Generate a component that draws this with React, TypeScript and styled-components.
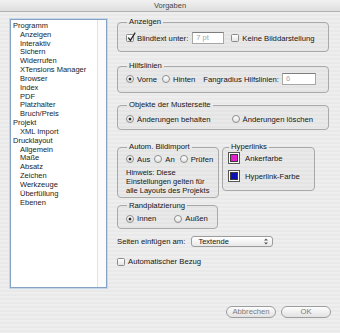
import React from 'react';
import styled, { createGlobalStyle } from 'styled-components';

const GlobalStyle = createGlobalStyle`
  html, body { margin: 0; padding: 0; background: #ececec; }
  body { font-family: "Liberation Sans", Arial, sans-serif; }
`;

//region:Window
const Window = styled.div`
  width: 340px;
  height: 333px;
  overflow: hidden;
  display: flex;
  flex-direction: column;
  background: repeating-linear-gradient(180deg, #eeeeee 0 2px, #e9e9e9 2px 4px);
  color: #161616;
  font-family: "Liberation Sans", Arial, sans-serif;
  font-size: 7.7px;
`
const TitleBar = styled.div`
  flex: none;
  height: 11px;
  line-height: 11px;
  text-align: center;
  font-size: 7.5px;
  color: #454545;
  background: linear-gradient(#f1f1f1, #dedede);
  border-bottom: 1px solid #b2b2b2;
`
const Body = styled.div`
  display: flex;
  align-items: flex-start;
  gap: 10px;
  padding-left: 10px;
`
//endregion

//region:Tree
const TreeBox = styled.div`
  margin-top: 7px;
  width: 97px;
  height: 269px;
  box-sizing: border-box;
  display: flex;
  background: #fff;
  border: 1px solid #86a3c6;
  box-shadow: 0 0 0 1px #c6d6e9;
`
const TreeList = styled.ul`
  flex: 1;
  margin: 0;
  padding: 2px 0 0 2px;
  list-style: none;
  font-size: 7.5px;
  line-height: 8.83px;
  color: #1c1c1c;
`
const TreeItem = styled.li<{ $sub?: boolean }>`
  padding-left: ${p => (p.$sub ? 7 : 0)}px;
  white-space: nowrap;
`
const Scroller = styled.div`
  width: 8px;
  border-left: 1px solid #e3e3e3;
  background: #fbfbfb;
`
//endregion

//region:Panel
const Panel = styled.div`
  width: 212px;
  margin-top: 5px;
  display: flex;
  flex-direction: column;
`
const Group = styled.fieldset<{ $mt?: number; $pt: number; $pb: number; $pl?: number; $w?: number }>`
  margin: ${p => p.$mt ?? 0}px 0 0;
  padding: ${p => p.$pt}px 4px ${p => p.$pb}px ${p => p.$pl ?? 8}px;
  width: ${p => (p.$w ? `${p.$w}px` : 'auto')};
  min-width: 0;
  box-sizing: border-box;
  border: 1px solid #a9a9a9;
  border-radius: 4px;
  background: rgba(0, 0, 0, 0.018);
`
const Legend = styled.legend`
  margin-left: 1px;
  padding: 0 2px;
  font-size: 7.7px;
  line-height: 10px;
`
const Row = styled.div<{ $h?: number; $mt?: number }>`
  display: flex;
  align-items: center;
  height: ${p => p.$h ?? 14}px;
  margin-top: ${p => p.$mt ?? 0}px;
  white-space: nowrap;
`
const PairRow = styled.div`
  display: flex;
  align-items: flex-start;
  gap: 3px;
  margin-top: 12px;
`
const Label = styled.span<{ $ml?: number }>`
  margin-left: ${p => p.$ml ?? 0}px;
`
const Option = styled.label<{ $ml?: number }>`
  display: inline-flex;
  align-items: center;
  gap: 3px;
  margin-left: ${p => p.$ml ?? 0}px;
  white-space: nowrap;
`
const Box = styled.span`
  position: relative;
  flex: none;
  width: 8px;
  height: 8px;
  box-sizing: border-box;
  border: 1px solid #8b8b8b;
  border-radius: 1.5px;
  background: linear-gradient(#ffffff, #e4e4e4);
`
const CheckMark = styled.svg`
  position: absolute;
  left: 0;
  top: -3px;
  width: 9px;
  height: 10px;
  overflow: visible;
`
const RadioDot = styled.span<{ $on?: boolean }>`
  flex: none;
  width: 8px;
  height: 8px;
  box-sizing: border-box;
  border: 1px solid #8d8d8d;
  border-radius: 50%;
  background: ${p =>
    p.$on
      ? 'radial-gradient(circle, #2c2c2c 0 1.2px, transparent 1.7px), linear-gradient(#ffffff, #e2e2e2)'
      : 'linear-gradient(#ffffff, #e2e2e2)'};
`
const TextInput = styled.div<{ $w: number; $ml?: number }>`
  width: ${p => p.$w}px;
  height: 12px;
  margin-left: ${p => p.$ml ?? 0}px;
  box-sizing: border-box;
  padding-left: 3px;
  border: 1px solid #a7a7a7;
  border-top-color: #7d7d7d;
  background: #fff;
  color: #a8a8a8;
  font-size: 7.5px;
  line-height: 10px;
`
const Hint = styled.div`
  margin-top: 1.5px;
  font-size: 7.5px;
  line-height: 9px;
  white-space: nowrap;
`
const SwatchList = styled.div`
  display: flex;
  flex-direction: column;
  gap: 6px;
`
const Swatch = styled.span<{ $color: string }>`
  flex: none;
  width: 12px;
  height: 12px;
  box-sizing: border-box;
  padding: 1px;
  border: 1px solid #555;
  background: #fff;
  &::after {
    content: '';
    display: block;
    width: 100%;
    height: 100%;
    box-sizing: border-box;
    border: 1px solid #3a3a3a;
    background: ${p => p.$color};
  }
`
const Select = styled.div`
  width: 82px;
  height: 11px;
  margin-left: 6px;
  box-sizing: border-box;
  padding: 0 4px 0 6px;
  display: flex;
  align-items: center;
  justify-content: space-between;
  border: 1px solid #9c9c9c;
  border-radius: 3px;
  background: linear-gradient(#ffffff, #e8e8e8);
  font-size: 7.5px;
`
//endregion

//region:Footer
const Footer = styled.div`
  display: flex;
  justify-content: flex-end;
  gap: 5px;
  padding: 18px 9px 0 0;
`
const Button = styled.button`
  width: 50px;
  height: 12px;
  padding: 0;
  border: 1px solid #9d9d9d;
  border-radius: 6px;
  background: linear-gradient(#fdfdfd, #e2e2e2);
  color: #7b7b7b;
  font-family: inherit;
  font-size: 7.7px;
  line-height: 10px;
`
//endregion

const Check = ({ on, label, ml }: { on?: boolean; label: string; ml?: number }) => (
  <Option $ml={ml}>
    <Box>
      {on ? (
        <CheckMark viewBox="0 0 9 10">
          <path d="M1.3 5.6 L3.4 8.4 L8.2 0.6" fill="none" stroke="#222" strokeWidth="1.2" />
        </CheckMark>
      ) : null}
    </Box>
    {label}
  </Option>
)

const Radio = ({ on, label, ml }: { on?: boolean; label: string; ml?: number }) => (
  <Option $ml={ml}>
    <RadioDot $on={on} />
    {label}
  </Option>
)

const tree: [string, boolean][] = [
  ['Programm', false],
  ['Anzeigen', true],
  ['Interaktiv', true],
  ['Sichern', true],
  ['Widerrufen', true],
  ['XTensions Manager', true],
  ['Browser', true],
  ['Index', true],
  ['PDF', true],
  ['Platzhalter', true],
  ['Bruch/Preis', true],
  ['Projekt', false],
  ['XML Import', true],
  ['Drucklayout', false],
  ['Allgemein', true],
  ['Maße', true],
  ['Absatz', true],
  ['Zeichen', true],
  ['Werkzeuge', true],
  ['Überfüllung', true],
  ['Ebenen', true],
]

export default function App() {
  return (
    <>
      <GlobalStyle />
      <Window>
        <TitleBar>Vorgaben</TitleBar>
        <Body>
          <TreeBox>
            <TreeList>
              {tree.map(([name, sub]) => (
                <TreeItem key={name} $sub={sub}>{name}</TreeItem>
              ))}
            </TreeList>
            <Scroller />
          </TreeBox>

          <Panel>
            <Group $pt={4} $pb={6}>
              <Legend>Anzeigen</Legend>
              <Row>
                <Check on label="Blindtext unter:" />
                <TextInput $w={32} $ml={4}>7 pt</TextInput>
                <Check label="Keine Bilddarstellung" ml={7} />
              </Row>
            </Group>

            <Group $mt={9} $pt={1} $pb={6}>
              <Legend>Hilfslinien</Legend>
              <Row>
                <Radio on label="Vorne" />
                <Radio label="Hinten" ml={5} />
                <Label $ml={8}>Fangradius Hilfslinien:</Label>
                <TextInput $w={34} $ml={3}>6</TextInput>
              </Row>
            </Group>

            <Group $mt={7} $pt={2} $pb={3}>
              <Legend>Objekte der Musterseite</Legend>
              <Row>
                <Radio on label="Änderungen behalten" />
                <Radio label="Änderungen löschen" ml={21} />
              </Row>
            </Group>

            <PairRow>
              <Group $pt={0} $pb={2} $w={102}>
                <Legend>Autom. Bildimport</Legend>
                <Row>
                  <Radio on label="Aus" />
                  <Radio label="An" ml={4} />
                  <Radio label="Prüfen" ml={5} />
                </Row>
                <Hint>
                  Hinweis: Diese<br />
                  Einstellungen gelten für<br />
                  alle Layouts des Projekts
                </Hint>
              </Group>
              <Group $pt={0} $pb={8} $pl={5} $w={93}>
                <Legend>Hyperlinks</Legend>
                <SwatchList>
                  <Row $h={12}>
                    <Swatch $color="#e21fc9" />
                    <Label $ml={5}>Ankerfarbe</Label>
                  </Row>
                  <Row $h={12}>
                    <Swatch $color="#0a10b8" />
                    <Label $ml={5}>Hyperlink-Farbe</Label>
                  </Row>
                </SwatchList>
              </Group>
            </PairRow>

            <Group $mt={3} $pt={1} $pb={2} $w={101}>
              <Legend>Randplatzierung</Legend>
              <Row>
                <Radio on label="Innen" />
                <Radio label="Außen" ml={18} />
              </Row>
            </Group>

            <Row $h={11} $mt={7}>
              <Label>Seiten einfügen am:</Label>
              <Select>
                Textende
                <svg width="4" height="7" viewBox="0 0 4 7">
                  <path d="M0 2.6 L2 0.4 L4 2.6 Z M0 4.4 L2 6.6 L4 4.4 Z" fill="#555" />
                </svg>
              </Select>
            </Row>

            <Row $h={10} $mt={10}>
              <Check label="Automatischer Bezug" />
            </Row>
          </Panel>
        </Body>

        <Footer>
          <Button>Abbrechen</Button>
          <Button>OK</Button>
        </Footer>
      </Window>
    </>
  )
}
